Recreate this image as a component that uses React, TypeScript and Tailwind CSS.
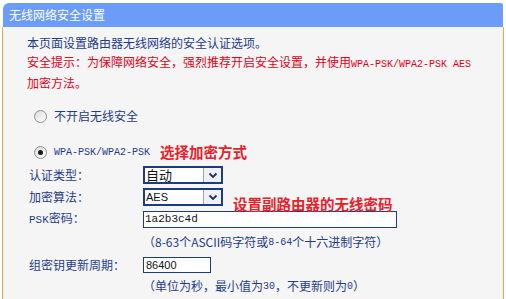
import React from "react";

function Radio({ checked }: { checked?: boolean }) {
  return (
    <span className="w-[13px] h-[13px] rounded-full border border-[#8d8d8d] bg-gradient-to-br from-[#dcdcdc] to-white flex items-center justify-center shrink-0">
      {checked ? <span className="w-[5px] h-[5px] rounded-full bg-[#1a1a1a]" /> : null}
    </span>
  );
}

function Select({ value, mono }: { value: string; mono?: boolean }) {
  return (
    <div className="w-[80px] h-[18px] border-2 border-[#1d3c7c] bg-white flex items-stretch">
      <span
        className={
          mono
            ? "flex-1 pl-[1px] text-[11px] leading-[14px] text-[#111] font-['Liberation_Sans',sans-serif]"
            : "flex-1 pl-[1px] text-[13px] leading-[14px] text-[#111]"
        }
      >
        {value}
      </span>
      <span className="w-[18px] border-l border-[#9aa3b5] bg-[#eef0f4] flex items-center justify-center">
        <svg width="10" height="7" viewBox="0 0 10 7">
          <path d="M1.5 1.5 L5 5 L8.5 1.5" fill="none" stroke="#1b2f63" strokeWidth="1.8" />
        </svg>
      </span>
    </div>
  );
}

export default function App() {
  const mono = "font-['Liberation_Mono',monospace]";
  return (
    <div className="w-[506px] h-[299px] bg-white overflow-hidden pt-[3px] pl-[2px] font-['Noto_Sans_CJK_SC','Noto_Sans',sans-serif]">
      <div className="ml-[1px] w-[500px] h-[24px] rounded-tl-[6px] rounded-tr-[2px] bg-[#6a9cf8] text-white text-[12px] leading-[24px] pl-[6px]">
        无线网络安全设置
      </div>
      <div className="w-[502px] h-[272px] border-l border-r border-[#efa45a] bg-[#f5f5f5] pl-[24px] pt-[7px] text-[12px] text-[#1f3c88]">
        <div className="leading-[18.5px]">
          <div>本页面设置路由器无线网络的安全认证选项。</div>
          <div className="text-[#e2001a]">
            安全提示：为保障网络安全，强烈推荐开启安全设置，并使用
            <span className={`${mono} text-[10px]`}>WPA-PSK/WPA2-PSK AES</span>
          </div>
          <div className="text-[#e2001a]">加密方法。</div>
        </div>

        <div className="mt-[13.5px] h-[20px] flex items-center">
          <span className="ml-[7px]">
            <Radio />
          </span>
          <span className="ml-[7px]">不开启无线安全</span>
        </div>

        <div className="mt-[16px] h-[20px] flex items-center">
          <span className="ml-[7px]">
            <Radio checked />
          </span>
          <span className={`ml-[7px] ${mono} text-[10px]`}>WPA-PSK/WPA2-PSK</span>
          <span className="ml-[10px] text-[14.5px] font-bold text-[#e8202a]">选择加密方式</span>
        </div>

        <div className="mt-[2px] h-[22px] flex items-center">
          <span className="ml-[2px] w-[114px]">认证类型：</span>
          <Select value="自动" />
        </div>

        <div className="h-[22px] flex items-center">
          <span className="ml-[2px] w-[114px]">加密算法：</span>
          <Select value="AES" mono />
          <span className="ml-[10px] text-[14.5px] font-bold text-[#e8202a] translate-y-[7px]">
            设置副路由器的无线密码
          </span>
        </div>

        <div className="h-[22px] flex items-center">
          <span className="ml-[2px] w-[114px]">
            <span className={`${mono} text-[11px]`}>PSK</span>密码：
          </span>
          <div className={`w-[254px] h-[17px] border border-[#1d3c7c] bg-white pl-[1px] text-[11px] leading-[15px] text-[#111] ${mono}`}>
            1a2b3c4d
          </div>
        </div>

        <div className="h-[24px] flex items-center pl-[116px]">
          （8-63个ASCII码字符或<span className={`${mono} text-[10px]`}>8-64</span>个十六进制字符）
        </div>

        <div className="h-[22px] flex items-center">
          <span className="ml-[2px] w-[114px]">组密钥更新周期：</span>
          <div className="w-[68px] h-[16px] border border-[#1d3c7c] bg-white pl-[2px] text-[11px] leading-[14px] text-[#111] font-['Liberation_Sans',sans-serif]">
            86400
          </div>
        </div>

        <div className="h-[20px] flex items-center pl-[116px]">
          （单位为秒，最小值为<span className={`${mono} text-[10px]`}>30</span>，不更新则为<span className={`${mono} text-[10px]`}>0</span>）
        </div>
      </div>
    </div>
  );
}
